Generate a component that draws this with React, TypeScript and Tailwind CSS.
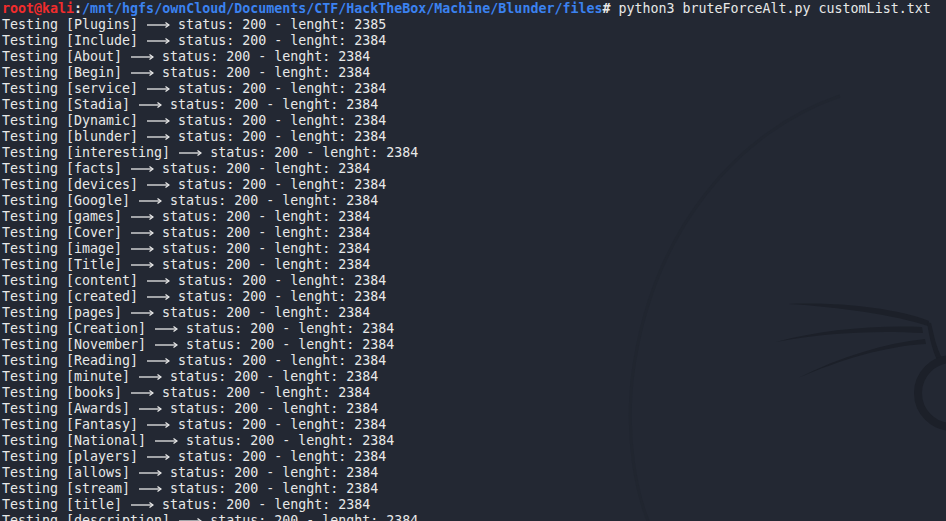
const words: [string, string][] = [
  ["Plugins", "2385"],
  ["Include", "2384"],
  ["About", "2384"],
  ["Begin", "2384"],
  ["service", "2384"],
  ["Stadia", "2384"],
  ["Dynamic", "2384"],
  ["blunder", "2384"],
  ["interesting", "2384"],
  ["facts", "2384"],
  ["devices", "2384"],
  ["Google", "2384"],
  ["games", "2384"],
  ["Cover", "2384"],
  ["image", "2384"],
  ["Title", "2384"],
  ["content", "2384"],
  ["created", "2384"],
  ["pages", "2384"],
  ["Creation", "2384"],
  ["November", "2384"],
  ["Reading", "2384"],
  ["minute", "2384"],
  ["books", "2384"],
  ["Awards", "2384"],
  ["Fantasy", "2384"],
  ["National", "2384"],
  ["players", "2384"],
  ["allows", "2384"],
  ["stream", "2384"],
  ["title", "2384"],
  ["description", "2384"],
];

function Dragon() {
  return (
    <svg className="absolute inset-0 w-full h-full pointer-events-none" viewBox="0 0 946 521">
      {/* faint outer arc of the wallpaper */}
      <path d="M840 96 C 740 130, 650 230, 632 380 C 626 440, 636 490, 648 521" fill="none" stroke="#20252e" strokeWidth="3" opacity="0.6" />
      {/* whiskers */}
      <path d="M788 304 C 840 302, 895 308, 929 321 L 928 326 C 895 315, 840 307, 788 304 Z" fill="#1c2029" />
      <path d="M776 342 C 820 330, 875 325, 922 327 L 923 333 C 875 330, 820 333, 776 342 Z" fill="#1c2029" />
      <path d="M798 378 C 840 357, 885 343, 925 339 L 926 344 C 885 346, 840 360, 798 378 Z" fill="#1c2029" />
      <path d="M927 322 C 929 336, 932 349, 937 360 L 942 358 C 936 347, 934 335, 931 323 Z" fill="#1c2029" />
      {/* head ring */}
      <circle cx="952" cy="393" r="34" fill="none" stroke="#1c2029" strokeWidth="8" />
    </svg>
  );
}

// "-->" ligature, three cells wide
function Arrow() {
  return (
    <svg className="inline-block align-top" width="24" height="16" viewBox="0 0 24 16">
      <path d="M1 8 H22.5" stroke="#e8e8e8" strokeWidth="1.3" />
      <path d="M19.5 5.5 L23 8 L19.5 10.5" fill="none" stroke="#e8e8e8" strokeWidth="1.3" />
    </svg>
  );
}

export default function App() {
  return (
    <div className="relative w-[946px] h-[521px] overflow-hidden bg-[#232833]">
      <Dragon />
      <div
        className="relative pl-[2px] pt-[1px] text-[13.3px] leading-4 text-[#e8e8e8] whitespace-pre"
        style={{ fontFamily: '"DejaVu Sans Mono", "Liberation Mono", monospace' }}
      >
        <div className="h-4 font-bold">
          <span className="text-[#f22c2c]">root@kali</span>
          <span className="text-[#e8e8e8]">:</span>
          <span className="text-[#3b82f0]">/mnt/hgfs/ownCloud/Documents/CTF/HackTheBox/Machine/Blunder/files</span>
          <span className="text-[#e8e8e8]"># </span>
          <span className="font-normal">python3 bruteForceAlt.py customList.txt</span>
        </div>
        {words.map(([w, len]) => (
          <div key={w} className="h-4">
            {`Testing [${w}] `}
            <Arrow />
            {` status: 200 - lenght: ${len}`}
          </div>
        ))}
      </div>
    </div>
  );
}
